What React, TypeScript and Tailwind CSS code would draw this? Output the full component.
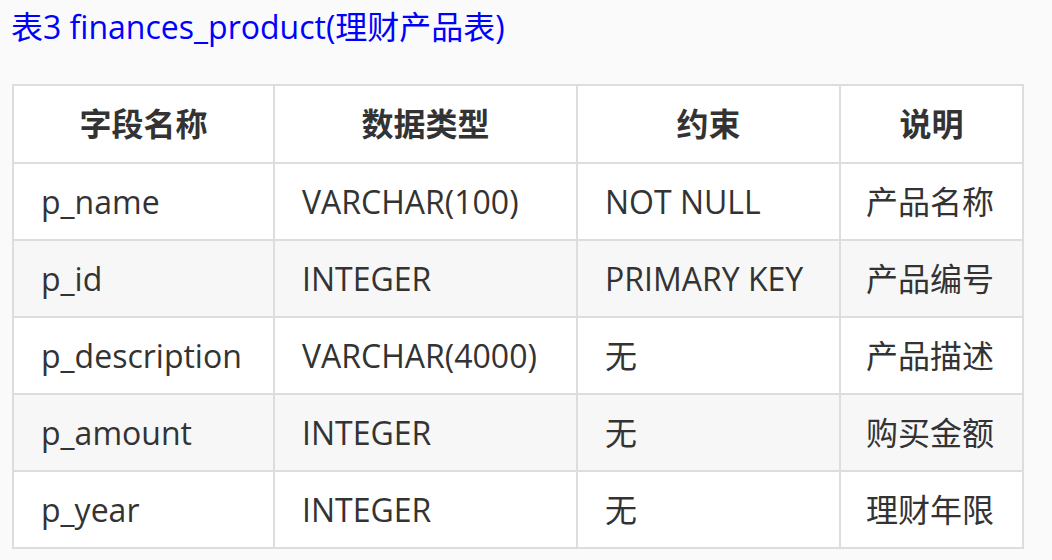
import React from 'react';

const rows = [
  { name: 'p_name', type: 'VARCHAR(100)', rule: 'NOT NULL', note: '产品名称' },
  { name: 'p_id', type: 'INTEGER', rule: 'PRIMARY KEY', note: '产品编号' },
  { name: 'p_description', type: 'VARCHAR(4000)', rule: '无', note: '产品描述' },
  { name: 'p_amount', type: 'INTEGER', rule: '无', note: '购买金额' },
  { name: 'p_year', type: 'INTEGER', rule: '无', note: '理财年限' },
];

const cell = 'border-2 border-[#dddddd] pl-[27px] pr-[10px] h-[77px] text-left font-normal whitespace-nowrap';
const last = 'border-2 border-[#dddddd] pl-[25px] pr-0 h-[77px] text-left font-normal whitespace-nowrap';
const head = 'border-2 border-[#dddddd] h-[78px] text-center font-bold whitespace-nowrap';

export default function App() {
  return (
    <div
      className="w-[1052px] h-[560px] bg-[#fafafa] overflow-hidden text-[#333333]"
      style={{ fontFamily: '"Open Sans", "Noto Sans CJK SC", sans-serif' }}
    >
      <h3 className="px-[11px] pt-[5px] h-[84px] text-[32px] leading-[44px] text-[#0000ff] font-normal">
        表3 finances_product(理财产品表)
      </h3>
      <table className="ml-[12px] w-[1010px] table-fixed border-collapse text-[32px] leading-[40px]">
        <colgroup>
          <col className="w-[261px]" />
          <col className="w-[303px]" />
          <col className="w-[263px]" />
          <col className="w-[183px]" />
        </colgroup>
        <thead>
          <tr className="bg-white">
            <th className={head}>字段名称</th>
            <th className={head}>数据类型</th>
            <th className={head}>约束</th>
            <th className={head}>说明</th>
          </tr>
        </thead>
        <tbody>
          {rows.map((r, i) => (
            <tr key={r.name} className={i % 2 === 1 ? 'bg-[#f7f7f7]' : 'bg-white'}>
              <td className={cell}>{r.name}</td>
              <td className={cell}>{r.type}</td>
              <td className={cell}>{r.rule}</td>
              <td className={last}>{r.note}</td>
            </tr>
          ))}
        </tbody>
      </table>
    </div>
  );
}
